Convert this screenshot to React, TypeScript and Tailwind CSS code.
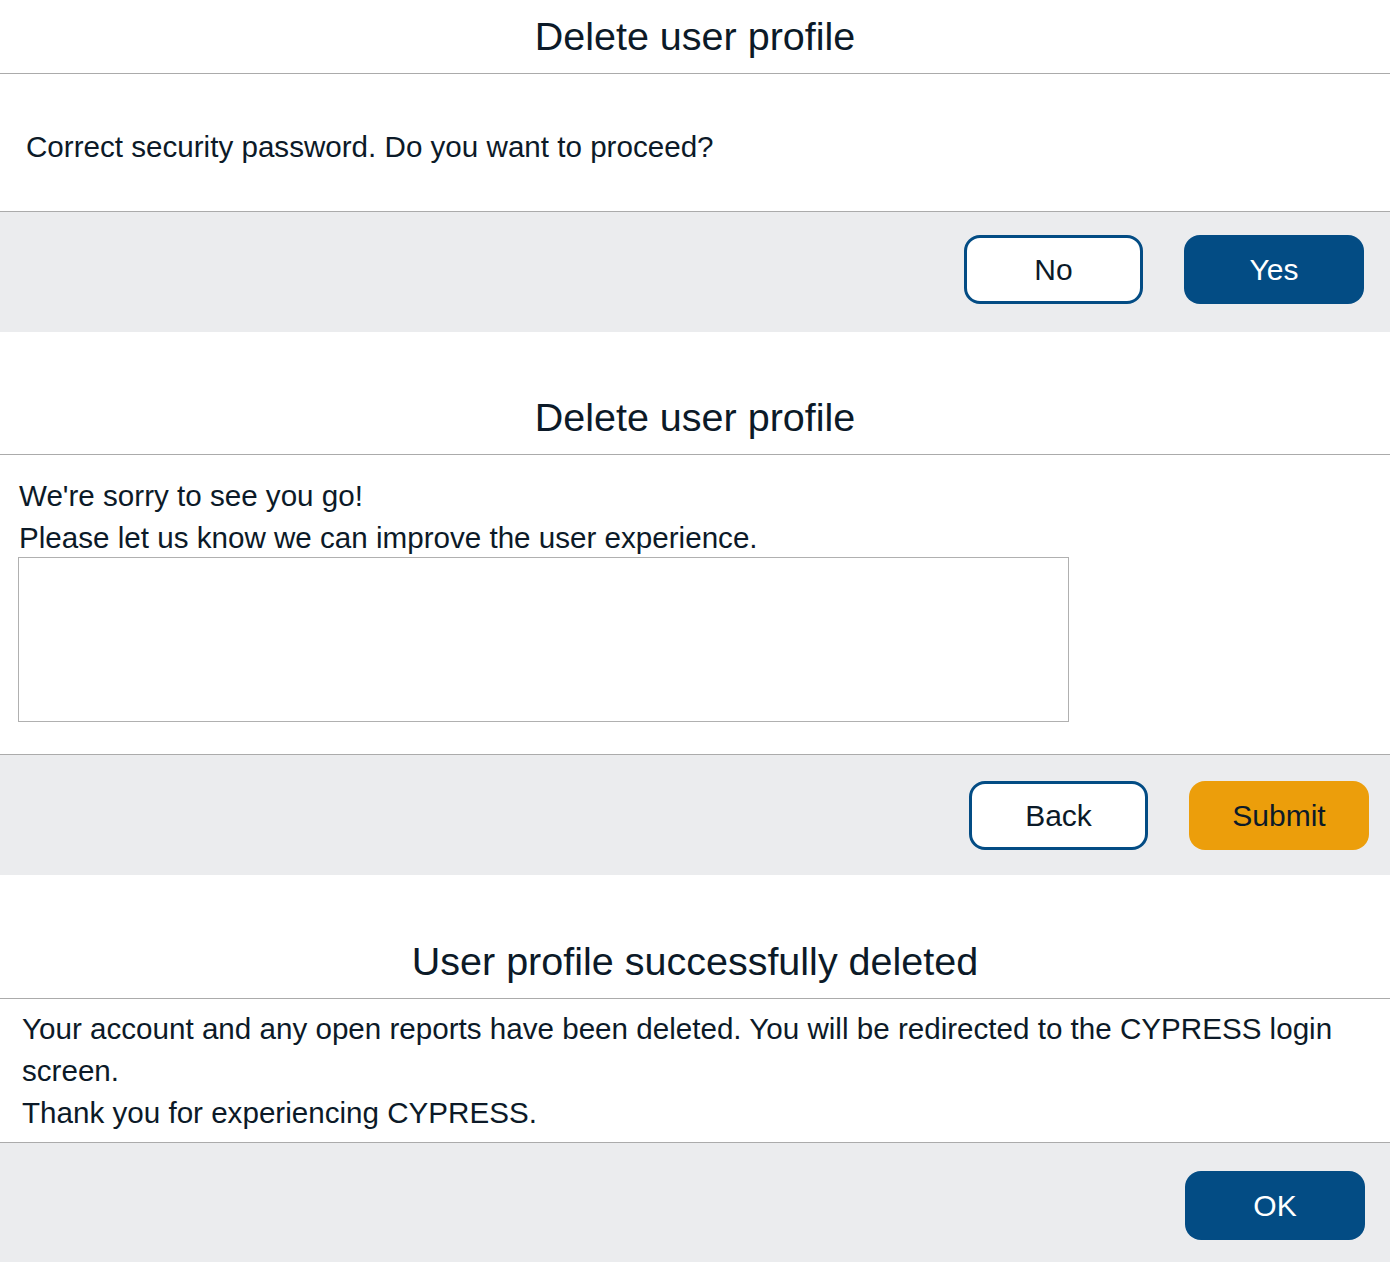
const font = { fontFamily: '"Liberation Sans", Arial, sans-serif' };

function Title({ children }: { children: React.ReactNode }) {
  return (
    <div className="flex h-[74px] items-center justify-center border-b border-[#ababab] pt-[1px] text-[39.5px] text-[#0c1a28]">
      {children}
    </div>
  );
}

function OutlineButton({ children }: { children: React.ReactNode }) {
  return (
    <button className="flex h-[69px] w-[179px] items-center justify-center rounded-[16px] border-[3px] border-[#034c84] bg-white text-[30px] text-[#0c1a28]">
      {children}
    </button>
  );
}

function SolidButton({
  children,
  tone = 'blue',
}: {
  children: React.ReactNode;
  tone?: 'blue' | 'orange';
}) {
  return (
    <button
      className={
        tone === 'blue'
          ? 'flex h-[69px] w-[180px] items-center justify-center rounded-[16px] bg-[#034c84] text-[30px] text-white'
          : 'flex h-[69px] w-[180px] items-center justify-center rounded-[16px] bg-[#ec9e0b] text-[30px] text-[#0c1a28]'
      }
    >
      {children}
    </button>
  );
}

export default function App() {
  return (
    <div className="w-[1390px] bg-white" style={font}>
      {/* Step 1: confirm */}
      <section>
        <Title>Delete user profile</Title>
        <div className="h-[138px] border-b border-[#ababab] pl-[26px] pt-[52px] text-[29.6px] leading-[42px] text-[#0c1a28]">
          Correct security password. Do you want to proceed?
        </div>
        <div className="flex h-[120px] items-start justify-end gap-[41px] bg-[#ebecee] pr-[26px] pt-[23px]">
          <OutlineButton>No</OutlineButton>
          <SolidButton>Yes</SolidButton>
        </div>
      </section>

      <div className="h-[49px]" />

      {/* Step 2: feedback */}
      <section>
        <Title>Delete user profile</Title>
        <div className="border-b border-[#ababab] pb-[32px] pl-[18px] pt-[20px] text-[29.6px] leading-[42px] text-[#0c1a28]">
          <p className="pl-px">We're sorry to see you go!</p>
          <p className="pl-px">Please let us know we can improve the user experience.</p>
          <textarea className="-mt-[2px] block h-[165px] w-[1051px] resize-none border border-[#b0b0b0] bg-white outline-none" />
        </div>
        <div className="flex h-[120px] items-start justify-end gap-[41px] bg-[#ebecee] pr-[21px] pt-[26px]">
          <OutlineButton>Back</OutlineButton>
          <SolidButton tone="orange">Submit</SolidButton>
        </div>
      </section>

      <div className="h-[50px]" />

      {/* Step 3: done */}
      <section>
        <Title>User profile successfully deleted</Title>
        <div className="border-b border-[#ababab] pb-[8px] pl-[22px] pr-[30px] pt-[9px] text-[29.6px] leading-[42px] text-[#0c1a28]">
          <p>
            Your account and any open reports have been deleted. You will be redirected to the CYPRESS login
            screen.
          </p>
          <p>Thank you for experiencing CYPRESS.</p>
        </div>
        <div className="flex h-[120px] items-start justify-end bg-[#ebecee] pr-[25px] pt-[28px]">
          <SolidButton>OK</SolidButton>
        </div>
      </section>
    </div>
  );
}
